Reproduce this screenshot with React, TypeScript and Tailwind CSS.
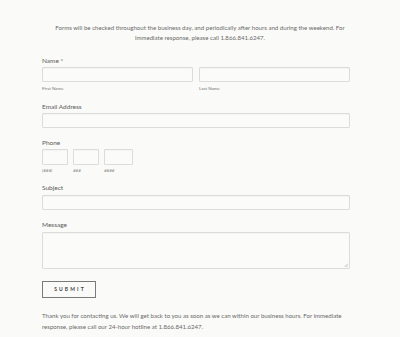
import React from 'react';

function Label({ children }: { children: React.ReactNode }) {
  return <label className="block text-[6.5px] leading-[8px] text-[#5c5c5c]">{children}</label>;
}

const inputCls = 'border border-[#dcdcdc] bg-[#fbfbfa] rounded-[1px] shadow-[inset_0_1px_1px_rgba(0,0,0,0.03)]';

export default function App() {
  return (
    <div className="w-[400px] h-[337px] bg-[#fafaf8] overflow-hidden font-['Lato',sans-serif] text-[#6a6a6a]">
      {/* Intro */}
      <p className="pt-[23px] px-[50px] text-center text-[6.1px] leading-[10px] text-[#6a6a6a]">
        Forms will be checked throughout the business day, and periodically after hours and during the weekend. For immediate response, please call 1.866.841.6247.
      </p>

      <form className="pl-[42px] pr-[50px] flex flex-col">
        {/* Name */}
        <div className="mt-[14px]">
          <Label>Name *</Label>
          <div className="mt-[2px] grid grid-cols-2 gap-[6px]">
            {['First Name', 'Last Name'].map((t) => (
              <div key={t} className="flex flex-col">
                <div className={`${inputCls} h-[15px]`} />
                <span className="mt-[4px] text-[4.5px] leading-[6px] text-[#777]">{t}</span>
              </div>
            ))}
          </div>
        </div>

        <div className="mt-[11px]">
          <Label>Email Address</Label>
          <div className={`${inputCls} mt-[2px] h-[15px]`} />
        </div>

        <div className="mt-[11px]">
          <Label>Phone</Label>
          <div className="mt-[2px] flex gap-[5px]">
            {[
              { w: 'w-[26px]', t: '(###)' },
              { w: 'w-[26px]', t: '###' },
              { w: 'w-[29px]', t: '####' },
            ].map((p) => (
              <div key={p.t} className="flex flex-col">
                <div className={`${inputCls} ${p.w} h-[16px]`} />
                <span className="mt-[3px] text-[4.5px] leading-[6px] italic text-[#777]">{p.t}</span>
              </div>
            ))}
          </div>
        </div>

        <div className="mt-[10px]">
          <Label>Subject</Label>
          <div className={`${inputCls} mt-[3px] h-[15px]`} />
        </div>

        <div className="mt-[11px]">
          <Label>Message</Label>
          <div className={`${inputCls} relative mt-[2.5px] h-[37px]`}>
            <svg className="absolute right-[1px] bottom-[1px]" width="4" height="4" viewBox="0 0 4 4">
              <path d="M0.5 4L4 0.5M2.2 4L4 2.2" stroke="#999" strokeWidth="0.5" />
            </svg>
          </div>
        </div>

        <button
          type="button"
          className="mt-[12.5px] w-[54px] h-[17px] border border-[#7a7a7a] bg-transparent text-[5px] font-bold tracking-[2.1px] text-[#444] flex items-center justify-center pl-[2px]"
        >
          SUBMIT
        </button>

        <p className="mt-[13px] w-[318px] text-[6.1px] leading-[10.7px] text-[#6a6a6a]">
          Thank you for contacting us. We will get back to you as soon as we can within our business hours. For immediate response, please call our 24-hour hotline at 1.866.841.6247.
        </p>
      </form>
    </div>
  );
}
